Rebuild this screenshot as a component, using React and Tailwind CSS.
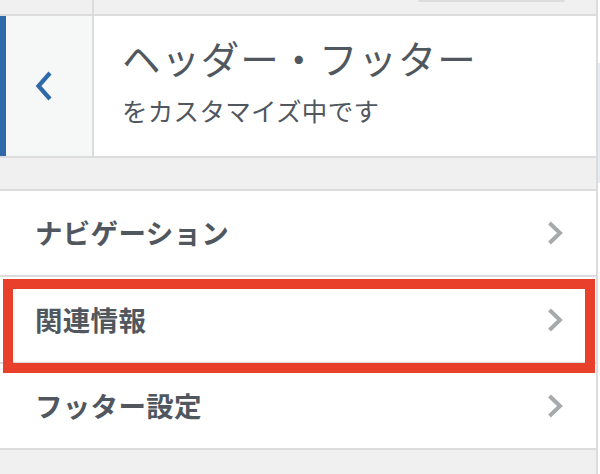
import React from "react";

function ChevronRight() {
  return (
    <svg width="16" height="24" viewBox="0 0 16 24" className="shrink-0">
      <polyline points="2.5,2 13,12 2.5,22" fill="none" stroke="#a7aaad" strokeWidth="4" strokeLinejoin="miter" strokeLinecap="butt" />
    </svg>
  );
}

function ChevronLeft() {
  return (
    <svg width="18" height="30" viewBox="0 0 18 30">
      <polyline points="15,2 3.5,15 15,28" fill="none" stroke="#2e6aa9" strokeWidth="4.2" strokeLinejoin="miter" strokeLinecap="butt" />
    </svg>
  );
}

function Item({ label, h = "h-[86px]" }) {
  return (
    <div className={"flex items-center justify-between border-b-2 border-[#dcdcde] bg-white pl-[35px] pr-[33px] " + h}>
      <span className="text-[27.5px] font-bold leading-none tracking-[0.3px] text-[#50575e]">{label}</span>
      <ChevronRight />
    </div>
  );
}

export default function App() {
  return (
    <div
      className="relative flex h-[474px] w-[600px] overflow-hidden bg-[#f0f0f1]"
      style={{ fontFamily: '"Noto Sans CJK JP", "Noto Sans", sans-serif' }}
    >
      <div className="flex w-[596px] flex-col">
        {/* top bar */}
        <div className="flex h-[16px] border-b-2 border-[#dcdcde]">
          <div className="w-[94px] border-r-2 border-[#dcdcde]" />
          <div className="ml-[324px] h-[2px] w-[147px] rounded-b-md bg-[#dcdcde]" />
        </div>
        {/* header */}
        <div className="flex h-[142px] border-b-2 border-[#dcdcde] bg-white">
          <div className="flex w-[94px] items-center border-l-[6px] border-r-2 border-[#dcdcde] border-l-[#2e6aa9] bg-[#f6f7f7] pl-[29px]">
            <ChevronLeft />
          </div>
          <div className="flex flex-col pl-[28px] pt-[22px]">
            <div className="text-[38.5px] leading-none tracking-[0.9px] text-[#50575e]">ヘッダー・フッター</div>
            <div className="mt-[20px] text-[25.5px] leading-none tracking-[0.3px] text-[#50575e]">をカスタマイズ中です</div>
          </div>
        </div>
        {/* gap band */}
        <div className="h-[33px] border-b-2 border-[#dcdcde]" />
        {/* menu */}
        <div className="flex flex-col">
          <Item label="ナビゲーション" />
          <Item label="関連情報" h="h-[87px]" />
          <Item label="フッター設定" />
        </div>
      </div>
      {/* right edge */}
      <div className="w-[2px] bg-[#dcdcde]" />
      <div className="flex w-[2px] flex-col bg-white">
        <div className="h-[63px]" />
        <div className="h-[120px] bg-[#e6ebf0]" />
      </div>
      {/* highlight box */}
      <div className="absolute left-[3px] top-[279px] h-[94px] w-[592px] border-[10px] border-[#e8402a]" />
    </div>
  );
}
